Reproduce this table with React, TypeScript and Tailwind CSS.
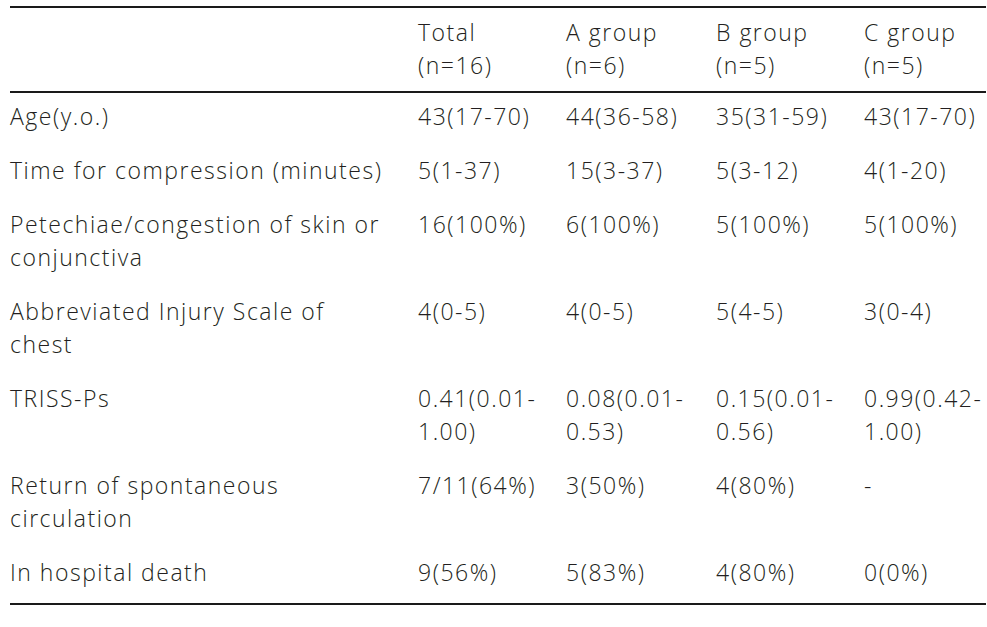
import React from "react";

type Row = { label: string[]; cells: string[][] };

const header: string[][] = [
  ["Total", "(n=16)"],
  ["A group", "(n=6)"],
  ["B group", "(n=5)"],
  ["C group", "(n=5)"],
];

const rows: Row[] = [
  { label: ["Age(y.o.)"], cells: [["43(17-70)"], ["44(36-58)"], ["35(31-59)"], ["43(17-70)"]] },
  { label: ["Time for compression (minutes)"], cells: [["5(1-37)"], ["15(3-37)"], ["5(3-12)"], ["4(1-20)"]] },
  { label: ["Petechiae/congestion of skin or", "conjunctiva"], cells: [["16(100%)"], ["6(100%)"], ["5(100%)"], ["5(100%)"]] },
  { label: ["Abbreviated Injury Scale of", "chest"], cells: [["4(0-5)"], ["4(0-5)"], ["5(4-5)"], ["3(0-4)"]] },
  { label: ["TRISS-Ps"], cells: [["0.41(0.01-", "1.00)"], ["0.08(0.01-", "0.53)"], ["0.15(0.01-", "0.56)"], ["0.99(0.42-", "1.00)"]] },
  { label: ["Return of spontaneous", "circulation"], cells: [["7/11(64%)"], ["3(50%)"], ["4(80%)"], ["-"]] },
  { label: ["In hospital death"], cells: [["9(56%)"], ["5(83%)"], ["4(80%)"], ["0(0%)"]] },
];

function Lines({ lines }: { lines: string[] }) {
  return (
    <div className="flex flex-col">
      {lines.map((l, i) => (
        <span key={i} className="whitespace-nowrap">
          {l}
        </span>
      ))}
    </div>
  );
}

const gridCols = "grid grid-cols-[408px_148px_150px_148px_1fr]";

export default function App() {
  return (
    <div
      className="w-[987px] h-[627px] bg-white text-[#231f20] text-[23px] leading-[33px] tracking-[1.5px] font-light"
      style={{ fontFamily: '"Open Sans", "Liberation Sans", sans-serif' }}
    >
      <div className="pt-[6px] pl-[10px] pr-[1px]">
        <div className="border-t-2 border-b-2 border-[#1a1a1a]">
          <div className={`${gridCols} pt-[8px] pb-[9px] border-b-2 border-[#1a1a1a]`}>
            <div />
            {header.map((h, i) => (
              <Lines key={i} lines={h} />
            ))}
          </div>
          {rows.map((r, i) => (
            <div key={i} className={`${gridCols} pt-[7px] pb-[14px]`}>
              <Lines lines={r.label} />
              {r.cells.map((c, j) => (
                <Lines key={j} lines={c} />
              ))}
            </div>
          ))}
        </div>
      </div>
    </div>
  );
}
